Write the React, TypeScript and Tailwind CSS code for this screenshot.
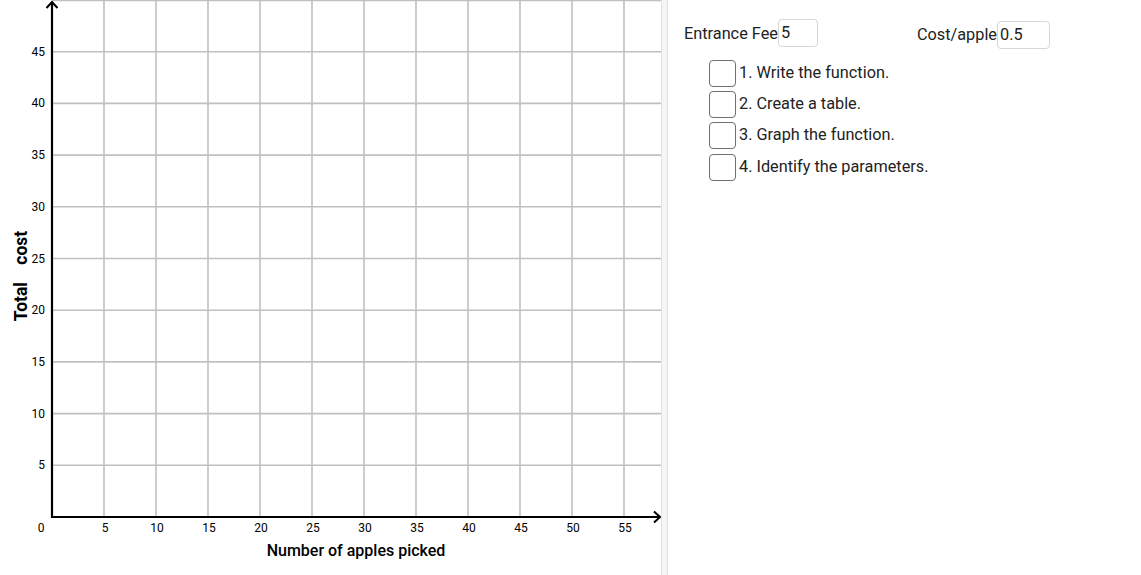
const xTicks = [5, 10, 15, 20, 25, 30, 35, 40, 45, 50, 55];
const yTicks = [5, 10, 15, 20, 25, 30, 35, 40, 45];

const ox = 52;
const oy = 517;
const sx = 10.4;
const sy = 10.34;

const tasks = [
  "1. Write the function.",
  "2. Create a table.",
  "3. Graph the function.",
  "4. Identify the parameters.",
];

function Graph() {
  return (
    <svg width={661} height={575} className="block shrink-0" style={{ fontFamily: "Roboto, 'Liberation Sans', sans-serif" }}>
      <rect width={661} height={575} fill="#ffffff" />
      {/* grid */}
      {xTicks.map((t) => (
        <line key={"gx" + t} x1={ox + t * sx} y1={0} x2={ox + t * sx} y2={oy} stroke="#c0c0c0" strokeWidth={1.6} />
      ))}
      <line x1={ox} y1={0.5} x2={661} y2={0.5} stroke="#c0c0c0" strokeWidth={1.6} />
      {yTicks.map((t) => (
        <line key={"gy" + t} x1={ox} y1={oy - t * sy} x2={661} y2={oy - t * sy} stroke="#c0c0c0" strokeWidth={1.6} />
      ))}
      {/* axes */}
      <line x1={ox} y1={2} x2={ox} y2={oy + 1} stroke="#000" strokeWidth={2.2} />
      <line x1={ox - 1} y1={oy} x2={660} y2={oy} stroke="#000" strokeWidth={2.2} />
      <polyline points="46.5,8 52,2 57.5,8" fill="none" stroke="#000" strokeWidth={2} />
      <polyline points="654,511.5 660,517 654,522.5" fill="none" stroke="#000" strokeWidth={2} />
      {/* tick labels */}
      {xTicks.map((t) => (
        <text key={"lx" + t} x={ox + t * sx + 1} y={532} fontSize={12} textAnchor="middle" fill="#000">
          {t}
        </text>
      ))}
      <text x={41} y={532} fontSize={12} textAnchor="middle" fill="#000">0</text>
      {yTicks.map((t) => (
        <text key={"ly" + t} x={45} y={oy - t * sy + 4} fontSize={12} textAnchor="end" fill="#000">
          {t}
        </text>
      ))}
      {/* axis labels */}
      <text x={356} y={556} fontSize={16} fontWeight={500} textAnchor="middle" fill="#000">
        Number of apples picked
      </text>
      <text
        x={0}
        y={0}
        fontSize={17.5}
        fontWeight={700}
        textAnchor="middle"
        fill="#000"
        transform="translate(27 276) rotate(-90)"
        xmlSpace="preserve"
      >
        Total    cost
      </text>
    </svg>
  );
}

function NumberBox({ value, width }: { value: string; width: string }) {
  return (
    <div className={`${width} h-[28px] rounded-[4px] border border-[#d6d6d6] pl-[2px] leading-[26px] text-[16.3px] text-[#222]`}>
      {value}
    </div>
  );
}

export default function App() {
  return (
    <div className="flex h-[575px] w-[1141px] overflow-hidden bg-white" style={{ fontFamily: "Roboto, 'Liberation Sans', sans-serif" }}>
      <Graph />
      <div className="w-[7px] shrink-0 border-x border-[#e2e2e2] bg-[#f5f5f5]" />
      <div className="flex flex-1 flex-col">
        <div className="flex items-start pl-[16px] pt-[19px]">
          <div className="flex items-center">
            <span className="pt-[2px] text-[16.3px] text-[#222]">Entrance Fee</span>
            <NumberBox value="5" width="w-[40px]" />
          </div>
          <div className="ml-[99px] mt-[2px] flex items-center">
            <span className="pt-[1px] text-[16.3px] text-[#222]">Cost/apple</span>
            <NumberBox value="0.5" width="w-[53px]" />
          </div>
        </div>
        <div className="mt-[11px] flex flex-col gap-[4px] pl-[41px]">
          {tasks.map((t, i) => (
            <div key={t} className={`flex h-[27px] items-center ${i === 3 ? "mt-[1px]" : ""}`}>
              <div className="h-[27px] w-[27px] rounded-[4px] border border-[#707070] bg-white" />
              <span className="ml-[3px] text-[16.3px] text-[#222]">{t}</span>
            </div>
          ))}
        </div>
      </div>
    </div>
  );
}
